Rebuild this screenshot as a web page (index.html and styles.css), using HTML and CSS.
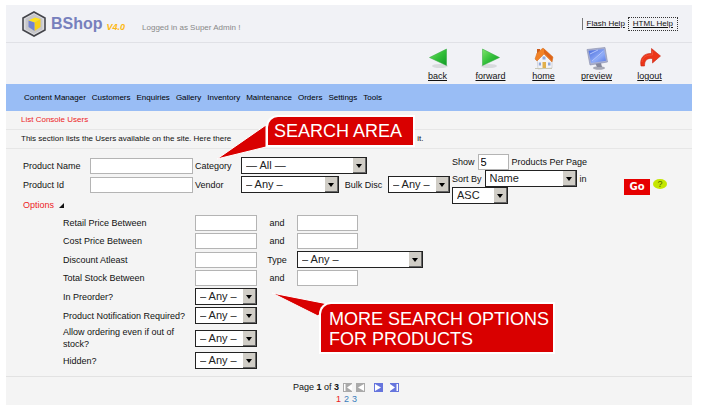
FILE: index.html
```html
<!DOCTYPE html>
<html lang="en">
<head>
<meta charset="utf-8">
<title>BShop - List Console Users</title>
<link rel="stylesheet" href="styles.css">
</head>
<body>
<div class="console">
  <header class="masthead">
    <svg class="logo" viewBox="0 0 24 26" aria-hidden="true">
      <path d="M12 1 23 7v12l-11 6L1 19V7z" fill="#dcdcdf" stroke="#44454b" stroke-width="1.6"/>
      <path d="M12 3 20.500 7.800v10.400L12 23 3.500 18.200V7.800z" fill="#c6c6ca"/>
      <path d="M6.500 9.500 13 6.500 18.500 8 12.500 11.500z" fill="#ffe21c"/>
      <path d="M12.500 11.500 18.500 8v8l-6 4z" fill="#f8d016"/>
      <path d="M6.500 9.500 12.500 11.500V20l-6-4z" fill="#7383cf"/>
    </svg>
    <span class="brand">BShop</span>
    <span class="version">V4.0</span>
    <span class="session">Logged in as Super Admin !</span>
    <nav class="help-links">
      <a href="#flash">Flash Help</a>
      <a class="focused" href="#html">HTML Help</a>
    </nav>
  </header>

  <nav class="toolbar">
    <a href="#back">
      <svg viewBox="0 0 24 24" aria-hidden="true">
        <defs><linearGradient id="green" x1="0" y1="0" x2="1" y2="1"><stop offset="0" stop-color="#7ee46a"/><stop offset=".5" stop-color="#34c03a"/><stop offset="1" stop-color="#129a28"/></linearGradient></defs>
        <ellipse cx="14" cy="20" rx="8" ry="2" fill="#d8dadd"/>
        <path d="M3.500 11.500 20.500 3v16.500z" fill="url(#green)" stroke="#2da63a" stroke-width=".5"/>
      </svg>back</a>
    <a href="#forward">
      <svg viewBox="0 0 24 24" aria-hidden="true">
        <ellipse cx="10" cy="20" rx="8" ry="2" fill="#d8dadd"/>
        <path d="M20.500 11.500 3.500 3v16.500z" fill="url(#green)" stroke="#2da63a" stroke-width=".5"/>
      </svg>forward</a>
    <a href="#home">
      <svg viewBox="0 0 24 24" aria-hidden="true">
        <path d="M5 11 12 6l8 6v10l-14 1z" fill="#f3f3f6" stroke="#b5b5bb" stroke-width=".5"/>
        <path d="M5 3h3v5H5z" fill="#c95b1c"/>
        <path d="M3 13 5 7l6-5 10 9-1 5-8-8-7 7z" fill="#f28226" stroke="#cf6a1e" stroke-width=".5"/>
        <path d="M12 3 20.500 11l-.5 4-8-8z" fill="#dd641b"/>
        <path d="M10.500 16h3.500v6.500h-3.500z" fill="#e1b04c"/>
        <path d="M10.500 10.500h3v3h-3zM16 16.500h2.500v3H16zM6.800 16.500H9v3H6.800z" fill="#8fa9dc"/>
        <path d="M3 22.500h17" stroke="#c7c7b4"/>
      </svg>home</a>
    <a href="#preview">
      <svg viewBox="0 0 24 24" aria-hidden="true">
        <defs><linearGradient id="screen" x1="0" y1="0" x2="1" y2="1"><stop offset="0" stop-color="#4769dc"/><stop offset=".6" stop-color="#8facf7"/><stop offset="1" stop-color="#5779e5"/></linearGradient></defs>
        <ellipse cx="14" cy="22" rx="6" ry="1.800" fill="#a6a8b5"/>
        <path d="M10 17h6l1 4h-5z" fill="#85889c"/>
        <path d="M2 3.500 20 1.500 22.500 16 5 19z" fill="#aab0cf" stroke="#858cad" stroke-width=".6"/>
        <path d="M3.500 4.700 19 2.900 21 14.800 6 17z" fill="url(#screen)"/>
        <path d="M7 15 18.500 5M5 8l8-4" stroke="#b4c6fc" stroke-width="1"/>
      </svg>preview</a>
    <a href="#logout">
      <svg viewBox="0 0 24 24" aria-hidden="true">
        <path d="M3 20C1.500 12 6 7 13.500 7.500V2.500L22.500 10 14.500 17v-4.500C9 12 6.500 14 6.500 20z" fill="#ec3519" stroke="#c9240f" stroke-width=".6"/>
        <path d="M4 16c.5-5 4-7 10.500-7V5" fill="none" stroke="#f4563b" stroke-width=".8"/>
      </svg>logout</a>
  </nav>

  <nav class="menu">
    <a href="#content">Content Manager</a>
    <a href="#customers">Customers</a>
    <a href="#enquiries">Enquiries</a>
    <a href="#gallery">Gallery</a>
    <a href="#inventory">Inventory</a>
    <a href="#maintenance">Maintenance</a>
    <a href="#orders">Orders</a>
    <a href="#settings">Settings</a>
    <a href="#tools">Tools</a>
  </nav>

  <main>
    <h1>List Console Users</h1>
    <p class="intro"><span>This section lists the Users available on the site. Here there</span> <span>it.</span></p>

    <form class="filters">
      <div class="search">
        <div class="criteria">
          <label for="name">Product Name</label>
          <input id="name" type="text">
          <label for="category">Category</label>
          <span class="pick w-category"><select id="category"><option>— All —</option></select></span>
          <label for="pid">Product Id</label>
          <input id="pid" type="text">
          <label for="vendor">Vendor</label>
          <div class="pair">
            <span class="pick w-vendor"><select id="vendor"><option>– Any –</option></select></span>
            <label for="bulk">Bulk Disc</label>
            <span class="pick w-any"><select id="bulk"><option>– Any –</option></select></span>
          </div>
          <a class="toggle" href="#options">Options
            <svg viewBox="0 0 5 5" aria-hidden="true"><path d="M5 0v5H0z" fill="#111"/></svg>
          </a>
        </div>
        <div class="listing">
          <div class="line">
            <label for="show">Show</label>
            <input id="show" class="count" type="text" value="5">
            <span>Products Per Page</span>
          </div>
          <div class="line">
            <label for="sort">Sort By</label>
            <span class="pick w-sort"><select id="sort"><option>Name</option></select></span>
            <label for="dir">in</label>
          </div>
          <span class="pick w-dir"><select id="dir"><option>ASC</option></select></span>
        </div>
        <div class="submit">
          <button type="submit">Go</button>
          <a class="hint" href="#hint">?</a>
        </div>
      </div>

      <div class="options">
        <label for="retail-from">Retail Price Between</label>
        <input id="retail-from" type="text">
        <label class="mid" for="retail-to">and</label>
        <input id="retail-to" type="text">

        <label for="cost-from">Cost Price Between</label>
        <input id="cost-from" type="text">
        <label class="mid" for="cost-to">and</label>
        <input id="cost-to" type="text">

        <label for="discount">Discount Atleast</label>
        <input id="discount" type="text">
        <label class="mid" for="type">Type</label>
        <span class="pick w-category"><select id="type"><option>– Any –</option></select></span>

        <label for="stock-from">Total Stock Between</label>
        <input id="stock-from" type="text">
        <label class="mid" for="stock-to">and</label>
        <input id="stock-to" type="text">

        <label class="first" for="preorder">In Preorder?</label>
        <span class="pick w-any"><select id="preorder"><option>– Any –</option></select></span>
        <label class="first" for="notify">Product Notification Required?</label>
        <span class="pick w-any"><select id="notify"><option>– Any –</option></select></span>
        <label class="first" for="oversell">Allow ordering even if out of stock?</label>
        <span class="pick w-any"><select id="oversell"><option>– Any –</option></select></span>
        <label class="first" for="hidden">Hidden?</label>
        <span class="pick w-any"><select id="hidden"><option>– Any –</option></select></span>
      </div>
    </form>

    <footer class="pager">
      <div class="steps">
        <span>Page <b>1</b> of <b>3</b></span>
        <svg class="off" viewBox="0 0 9 9" aria-hidden="true"><path d="M0 0h9v9H0z"/><path class="cut" d="M1 1h1.500v7H1zM9 1v7L4 4.500z"/></svg>
        <svg class="off" viewBox="0 0 9 9" aria-hidden="true"><path d="M0 0h9v9H0z"/><path class="cut" d="M8 1v7L2 4.500z"/></svg>
        <svg class="on next" viewBox="0 0 9 9" aria-hidden="true"><path d="M0 0h9v9H0z"/><path class="cut" d="M1 1v7l6-3.500z"/></svg>
        <svg class="on last" viewBox="0 0 9 9" aria-hidden="true"><path d="M0 0h9v9H0z"/><path class="cut" d="M0 1v7l5-3.500zM6.500 1H8v7H6.500z"/></svg>
      </div>
      <div class="pages"><a class="current" href="#p1">1</a><a href="#p2">2</a><a href="#p3">3</a></div>
    </footer>
  </main>

  <div class="callout callout-area">
    <svg viewBox="0 0 52 38" aria-hidden="true"><path d="M1 36 50 2v22z"/></svg>
    <p>SEARCH AREA</p>
  </div>
  <div class="callout callout-more">
    <svg viewBox="0 0 58 28" aria-hidden="true"><path d="M1 2 57 13 47 25z"/></svg>
    <p>MORE SEARCH OPTIONS<br>FOR PRODUCTS</p>
  </div>
</div>
</body>
</html>
```

FILE: styles.css
```css
* { box-sizing: border-box; }

body {
  margin: 0;
  background: #fff;
  color: #111;
  font: 9px/12px "Liberation Sans", Arial, sans-serif;
}

a { color: inherit; text-decoration: none; }
h1, p { margin: 0; font-weight: normal; }

.console {
  position: relative;
  margin: 5px 10px 7px 6px;
  background: #f4f4f4;
}

/* Header */
.masthead {
  display: flex;
  align-items: center;
  height: 38px;
  padding: 0 14px 0 16px;
  background: #f1f2f6;
  border-bottom: 1px solid #e0e1e6;
  font-size: 8px;
}
.logo { width: 24px; height: 26px; margin-right: 5px; }
.brand {
  color: #7780bd;
  font-weight: bold;
  font-size: 16px;
  line-height: 24px;
}
.version {
  margin: 6px 17px 0 4px;
  color: #fdb813;
  font-style: italic;
  font-weight: bold;
  font-size: 9px;
}
.session { margin-top: 8px; color: #888; }
.help-links { display: flex; align-items: center; gap: 3px; margin-left: auto; }
.help-links a { text-decoration: underline; padding-left: 4px; border-left: 1px solid #777; }
.help-links .focused { padding: 0 4px; border: 1px dotted #333; }

.toolbar {
  display: flex;
  justify-content: flex-end;
  height: 41px;
  padding: 3px 16px 0 0;
  background: #f1f2f6;
}
.toolbar a {
  display: flex;
  flex-direction: column;
  align-items: center;
  width: 53px;
  text-decoration: underline;
}
.toolbar svg { width: 24px; height: 24px; }

.menu {
  display: flex;
  align-items: center;
  gap: 6px;
  height: 27px;
  padding-left: 18px;
  background: #99bdf5;
  color: #000;
  font-size: 8px;
}

/* Page heading */
h1, .intro {
  padding-left: 15px;
  border-bottom: 1px solid #e6e6e6;
  font-size: 8px;
  line-height: 18px;
}
h1 { color: #ed1c24; }
.intro { display: flex; gap: 186px; }

/* Fields */
input {
  height: 16px;
  width: 100%;
  padding: 0 2px;
  border: 1px solid #b4b4b4;
  background: #fff;
  font: 11px/14px "Liberation Sans", Arial, sans-serif;
}
.pick { position: relative; display: block; }
.pick select {
  display: block;
  appearance: none;
  width: 100%;
  height: 17px;
  padding: 0 0 0 4px;
  border: 1px solid #222;
  border-radius: 0;
  background: #fff;
  color: #222;
  font: 11px/15px "Liberation Sans", Arial, sans-serif;
}
.pick::before {
  content: "";
  position: absolute;
  inset: 1px 1px 1px auto;
  width: 12px;
  background: #d0cdc6;
  border-right: 1px solid #666;
  border-bottom: 1px solid #666;
  pointer-events: none;
}
.pick::after {
  content: "";
  position: absolute;
  top: 7px;
  right: 5px;
  border: 3px solid transparent;
  border-top: 4px solid #000;
  border-bottom: 0;
  pointer-events: none;
}
.w-category { width: 126px; }
.w-vendor { width: 98px; }
.w-any { width: 62px; }
.w-sort { width: 92px; }
.w-dir { width: 56px; }

/* Search row */
.filters { padding: 5px 16px 7px 17px; }
.search { display: flex; align-items: flex-start; }
.criteria {
  display: grid;
  grid-template-columns: 65px 103px 44px auto;
  column-gap: 2px;
  row-gap: 2px;
  align-items: center;
  padding-top: 3px;
}
.pair { display: flex; align-items: center; justify-content: space-between; width: 209px; }
.listing { margin-left: 2px; }
.line { display: flex; align-items: center; gap: 3px; }
.line .count { width: 31px; }
.submit { display: flex; align-items: flex-start; gap: 3px; margin: 25px 9px 0 auto; }
.submit button {
  width: 26px;
  height: 16px;
  padding: 0;
  border: 0;
  background: #e60000;
  color: #fff;
  font: bold 10px/16px "DejaVu Sans", sans-serif;
}
.hint {
  width: 14px;
  height: 10px;
  border-radius: 50%;
  background: #c4e600;
  color: #4d6600;
  line-height: 10px;
  text-align: center;
}
.toggle {
  display: flex;
  grid-column: 1 / 3;
  align-items: center;
  gap: 5px;
  width: max-content;
  padding-top: 4px;
  color: #ed1c24;
}
.toggle svg { width: 5px; height: 5px; }

/* Extra options */
.options {
  display: grid;
  grid-template-columns: 132px 62px 40px auto;
  row-gap: 2px;
  align-items: center;
  margin: 4px 0 0 40px;
}
.options .first { grid-column: 1; }
.options .first + .pick { grid-column: 2; }
.options .mid { text-align: center; }
.options .mid + input { width: 61px; }

/* Pager */
.pager { padding: 4px 0 0 287px; border-top: 1px solid #e2e2e2; }
.steps { display: flex; align-items: center; gap: 4px; }
.steps svg { width: 9px; height: 9px; }
.steps .next { margin-left: 5px; }
.steps .last { margin-left: 3px; }
.off { fill: #aaa; }
.on { fill: #6675dd; }
.cut { fill: #fff; }
.pages { display: flex; gap: 3px; padding-left: 43px; color: #3b7dbd; }
.pages .current { color: #ed1c24; }

/* Annotations laid over the screen */
.callout { position: absolute; }
.callout p {
  position: relative;
  padding: 4px 11px 4px 6px;
  border-radius: 10px 0 0 0;
  background: #d90000;
  box-shadow: 0 0 0 2px #fff;
  color: #fff;
  font-size: 18px;
  line-height: 20px;
  white-space: nowrap;
}
.callout svg { position: absolute; fill: #d90000; stroke: #fff; stroke-width: 1; }
.callout-area { left: 262px; top: 112px; }
.callout-area svg { left: -52px; top: 6px; width: 52px; height: 38px; }
.callout-more { left: 315px; top: 299px; }
.callout-more p { padding: 5px 4px 3px 8px; }
.callout-more svg { left: -50px; top: -13px; width: 58px; height: 28px; }
```
